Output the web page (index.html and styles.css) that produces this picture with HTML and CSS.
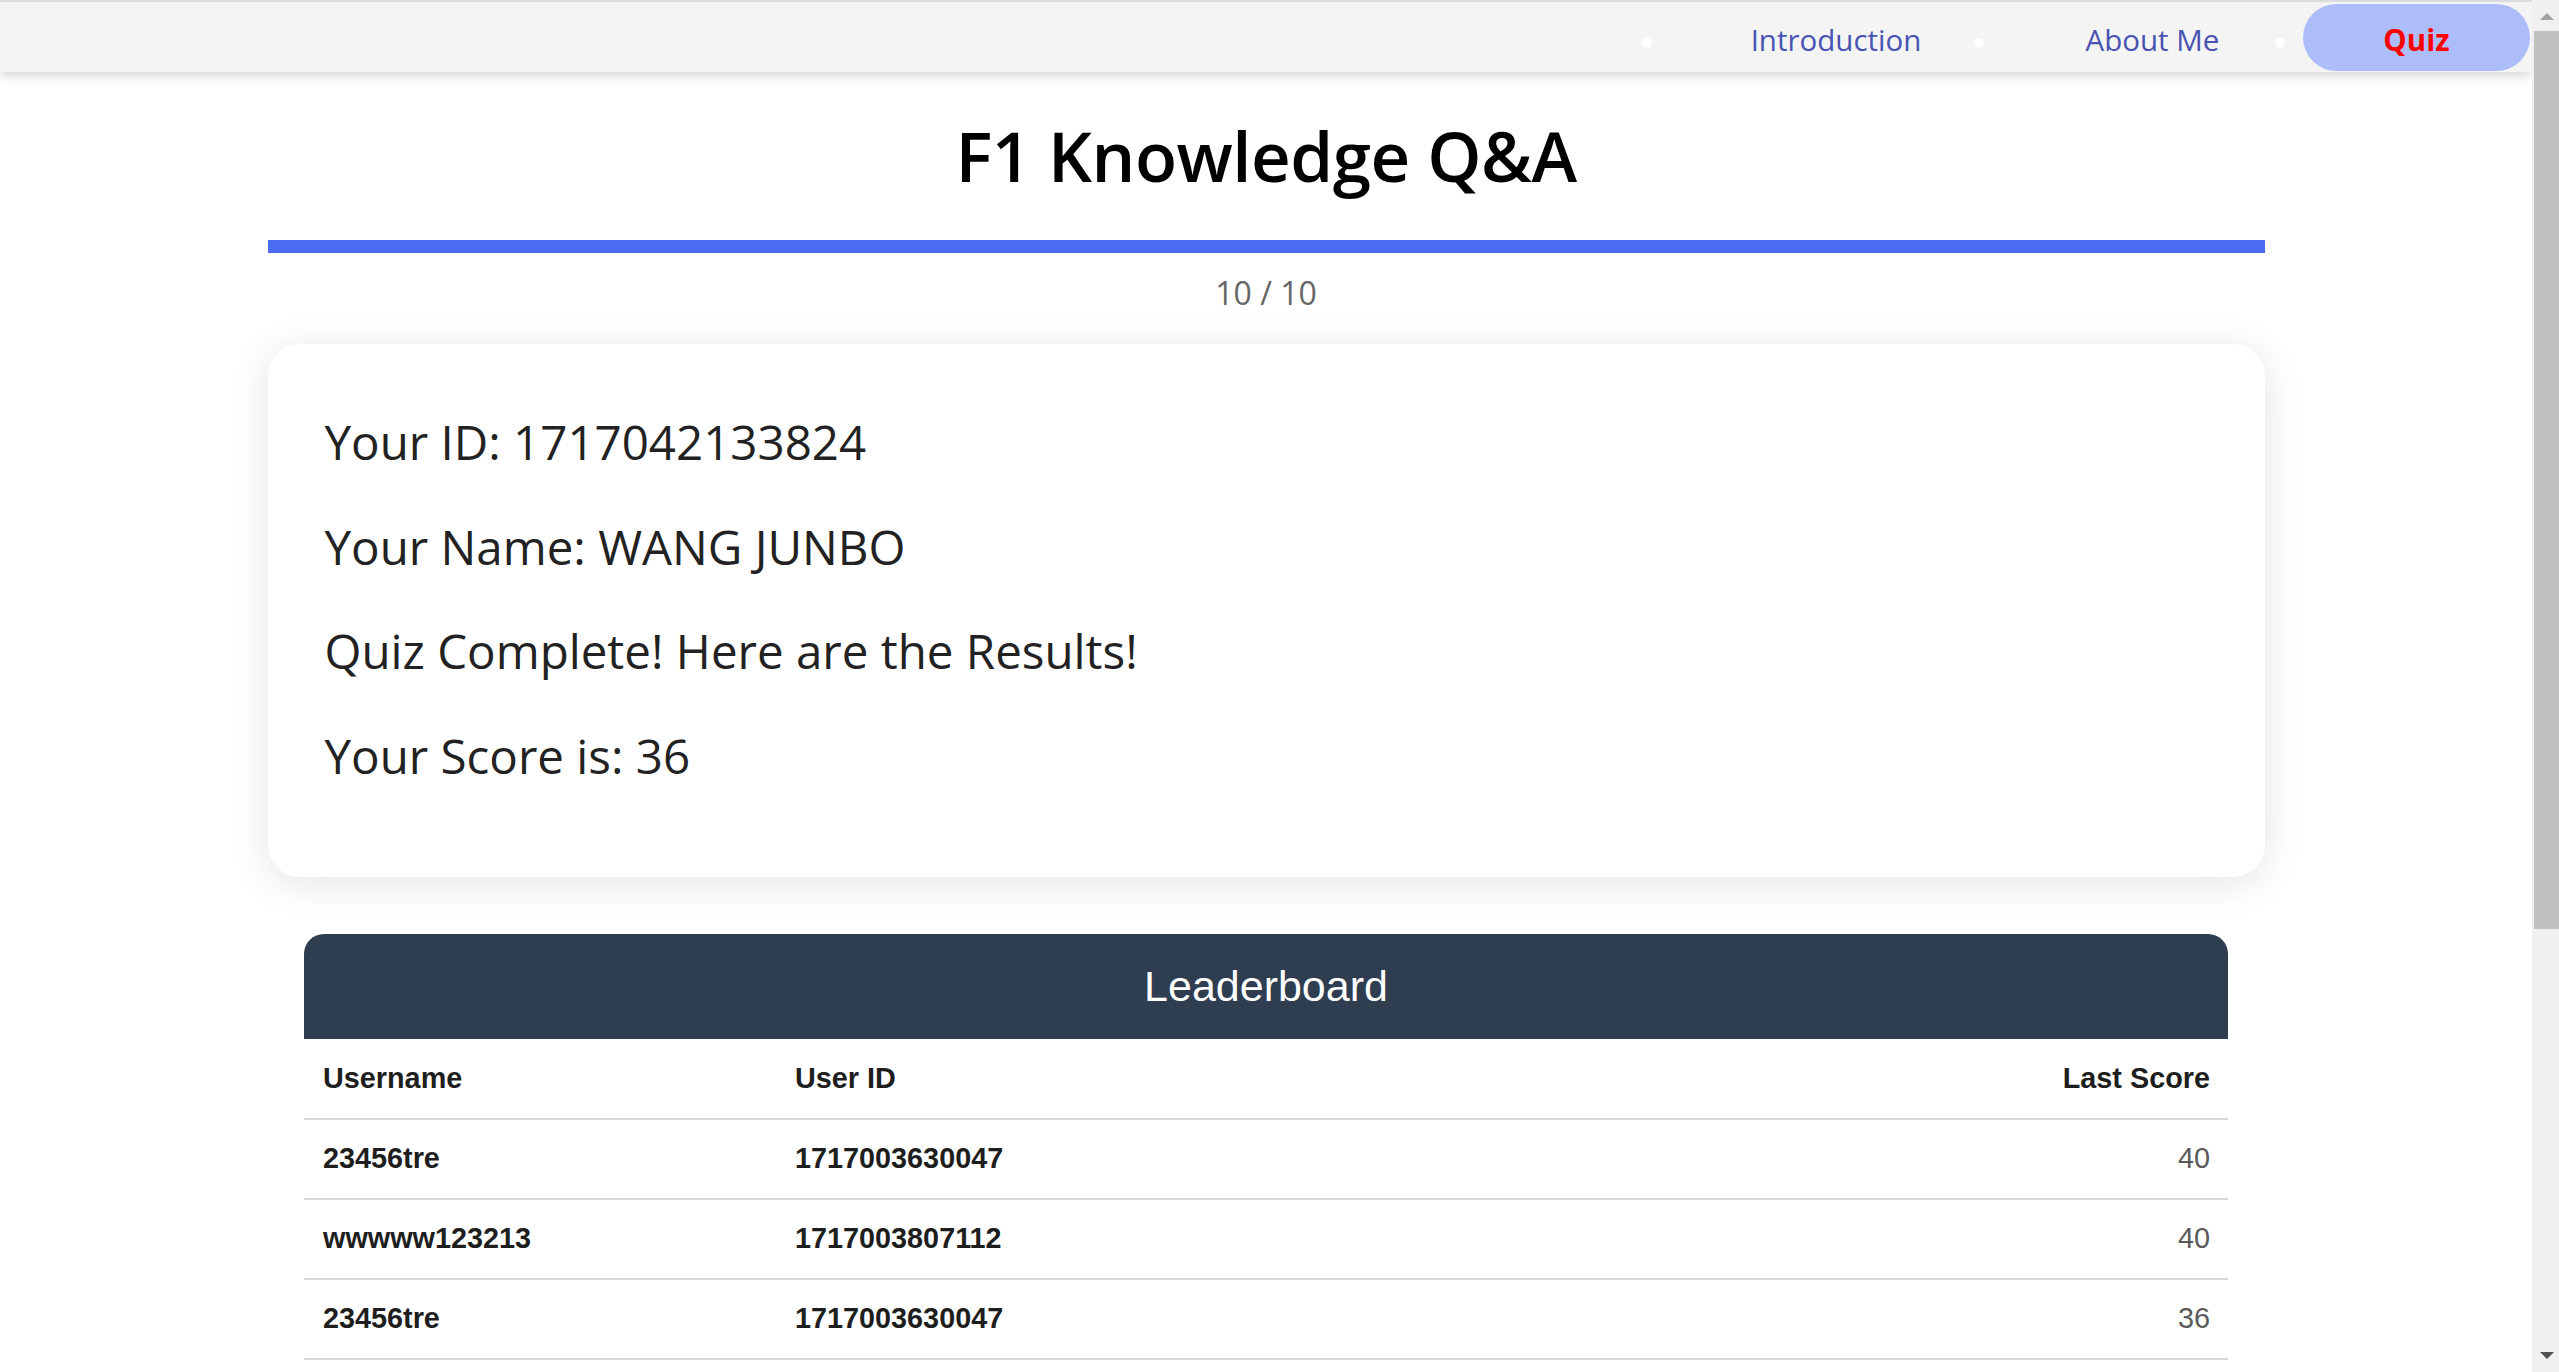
FILE: index.html
```html
<!DOCTYPE html>
<html lang="en">
<head>
<meta charset="utf-8">
<title>F1 Knowledge Q&amp;A</title>
<link rel="stylesheet" href="styles.css">
</head>
<body>
  <div class="page">
    <header class="nav">
      <ul class="menu">
        <li class="menu-item item-intro"><a class="menu-link" href="#">Introduction</a></li>
        <li class="menu-item item-about"><a class="menu-link" href="#">About Me</a></li>
        <li class="menu-item item-quiz"><a class="menu-link active" href="#">Quiz</a></li>
      </ul>
    </header>
    <main class="container">
      <h1 class="title">F1 Knowledge Q&amp;A</h1>
      <div class="progress"></div>
      <div class="counter">10 / 10</div>
      <section class="result-card">
        <p class="result-line">Your ID: 1717042133824</p>
        <p class="result-line">Your Name: WANG JUNBO</p>
        <p class="result-line">Quiz Complete! Here are the Results!</p>
        <p class="result-line">Your Score is: 36</p>
      </section>
      <section class="leaderboard">
        <h2 class="lb-title">Leaderboard</h2>
        <table class="lb-table">
          <colgroup>
            <col class="col-name">
            <col class="col-id">
            <col class="col-score">
          </colgroup>
          <thead>
            <tr>
              <th class="cell">Username</th>
              <th class="cell">User ID</th>
              <th class="cell cell-score">Last Score</th>
            </tr>
          </thead>
          <tbody>
            <tr>
              <td class="cell cell-strong">23456tre</td>
              <td class="cell cell-strong">1717003630047</td>
              <td class="cell cell-score">40</td>
            </tr>
            <tr>
              <td class="cell cell-strong">wwwww123213</td>
              <td class="cell cell-strong">1717003807112</td>
              <td class="cell cell-score">40</td>
            </tr>
            <tr>
              <td class="cell cell-strong">23456tre</td>
              <td class="cell cell-strong">1717003630047</td>
              <td class="cell cell-score">36</td>
            </tr>
          </tbody>
        </table>
      </section>
    </main>
  </div>
  <div class="scrollbar">
    <div class="sb-top"><span class="sb-arrow-up"></span></div>
    <div class="sb-thumb"></div>
    <div class="sb-track"></div>
    <div class="sb-bottom"><span class="sb-arrow-down"></span></div>
  </div>
</body>
</html>
```

FILE: styles.css
```css
html, body {
  margin: 0;
  padding: 0;
  height: 100%;
  overflow: hidden;
}

body {
  display: flex;
  background: #ffffff;
  font-family: "Open Sans", "Noto Sans", sans-serif;
}

.page {
  flex: 1;
  min-width: 0;
  height: 100vh;
  overflow: hidden;
}

/* ---------- navigation ---------- */
.nav {
  position: relative;
  z-index: 2;
  height: 70px;
  background: #f4f4f4;
  border-top: 2px solid #dcdcdc;
  box-shadow: 0 4px 10px rgba(0, 0, 0, 0.16);
}

.menu {
  display: flex;
  justify-content: flex-end;
  align-items: center;
  height: 70px;
  margin: 0;
  padding: 0 2px 0 0;
  list-style: none;
}

.menu-item {
  position: relative;
  display: flex;
}

.menu-item::before {
  content: "";
  position: absolute;
  left: -28px;
  top: 34px;
  width: 10px;
  height: 10px;
  border-radius: 50%;
  background: #ffffff;
}

.item-intro { width: 332px; }
.item-about { width: 301px; }
.item-quiz { width: 227px; }

.menu-link {
  display: flex;
  align-items: center;
  justify-content: center;
  width: 100%;
  height: 67px;
  box-sizing: border-box;
  padding-top: 5px;
  border-radius: 34px;
  font-size: 29.5px;
  color: #4953b3;
  text-decoration: none;
}

.menu-link.active {
  background: #adbdfa;
  color: #ff0000;
  font-weight: 700;
}

/* ---------- main ---------- */
.container {
  width: 1997px;
  margin: 0 auto;
}

.title {
  margin: 35px 0 37px;
  height: 96px;
  line-height: 96px;
  text-align: center;
  font-size: 69px;
  font-weight: 600;
  letter-spacing: -0.5px;
  color: #000000;
}

.progress {
  height: 13px;
  background: #4b6bf1;
}

.counter {
  margin-top: 18px;
  line-height: 44px;
  text-align: center;
  font-size: 32px;
  color: #666666;
}

.result-card {
  display: flex;
  flex-direction: column;
  gap: 40.5px;
  margin-top: 29px;
  padding: 66px 57px 89px;
  background: #ffffff;
  border-radius: 32px;
  box-shadow: 0 6px 40px rgba(0, 0, 0, 0.11);
}

.result-line {
  margin: 0;
  font-size: 47.5px;
  line-height: 64px;
  color: #222222;
}

/* ---------- leaderboard ---------- */
.leaderboard {
  width: 1924px;
  margin: 57px auto 0;
  font-family: "Liberation Sans", Arial, sans-serif;
}

.lb-title {
  margin: 0;
  height: 105px;
  line-height: 105px;
  text-align: center;
  font-size: 43px;
  font-weight: 400;
  color: #ffffff;
  background: #2f3d50;
  border-radius: 20px 20px 0 0;
}

.lb-table {
  width: 100%;
  border-collapse: collapse;
  table-layout: fixed;
}

.col-name { width: 472px; }
.col-id { width: 1000px; }

.cell {
  height: 80px;
  padding: 0 18px 0 19px;
  text-align: left;
  font-size: 28.8px;
  font-weight: 700;
  color: #1e1e1e;
  border-bottom: 2px solid #d8d8d8;
  box-sizing: border-box;
}

.lb-table td.cell-score {
  font-weight: 400;
  color: #5a5a5a;
}

.cell-score {
  text-align: right;
}

/* ---------- fake scrollbar ---------- */
.scrollbar {
  width: 27px;
  height: 100vh;
  background: #f0f0f0;
  display: flex;
  flex-direction: column;
  align-items: flex-end;
}

.sb-top {
  width: 25px;
  height: 31px;
  display: flex;
  justify-content: center;
  padding-top: 13px;
  box-sizing: border-box;
}

.sb-arrow-up {
  width: 0;
  height: 0;
  border-left: 7px solid transparent;
  border-right: 7px solid transparent;
  border-bottom: 7px solid #a3a3a3;
}

.sb-thumb {
  width: 25px;
  height: 898px;
  background: #c1c1c1;
}

.sb-track {
  flex: 1;
}

.sb-bottom {
  width: 25px;
  height: 20px;
  display: flex;
  justify-content: center;
}

.sb-arrow-down {
  width: 0;
  height: 0;
  border-left: 7px solid transparent;
  border-right: 7px solid transparent;
  border-top: 7px solid #505050;
}
```
